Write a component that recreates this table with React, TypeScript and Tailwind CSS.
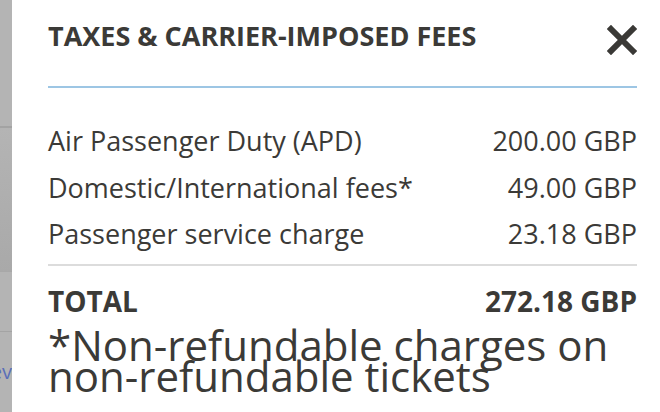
import React from 'react';

const rows = [
    { label: 'Air Passenger Duty (APD)', amount: '200.00 GBP' },
    { label: 'Domestic/International fees*', amount: '49.00 GBP' },
    { label: 'Passenger service charge', amount: '23.18 GBP' },
];

const CloseIcon = () => (
    <svg width="30" height="30" viewBox="0 0 30 30">
        <path d="M4 4 L26 26 M26 4 L4 26" stroke="#3a3936" strokeWidth="6" strokeLinecap="square" />
    </svg>
);

export default function App() {
    return (
        <div className="flex w-[660px] h-[412px] overflow-hidden bg-white text-[#3b3a37] font-['Open_Sans',sans-serif]">
            {/* Page behind the modal */}
            <div className="w-[12px] flex-shrink-0 flex flex-col bg-[#b4b4b4]">
                <div className="h-[128px] border-b-2 border-[#a3a3a3]" />
                <div className="h-[144px] border-b border-[#a8a8a8] bg-gradient-to-b from-[#b4b4b4] to-[#a9a9a9]" />
                <div className="h-[60px] border-b border-[#a4a4a4]" />
                <div className="flex justify-end overflow-hidden whitespace-nowrap text-[20px] leading-none text-[#5a6fb8] mt-[30px]">
                    Rev
                </div>
            </div>

            {/* Modal */}
            <div className="flex-1 flex flex-col pl-[36px] pr-[23px] pt-[20px]">
                <div className="h-[32px] flex items-start justify-between">
                    <h2 className="text-[27px] leading-[32px] font-bold">
                        TAXES &amp; CARRIER-IMPOSED FEES
                    </h2>
                    <button className="mt-[5px] flex-shrink-0">
                        <CloseIcon />
                    </button>
                </div>
                <div className="mt-[34px] h-[2px] bg-[#9dc6e4]" />

                <div className="pt-[30px]">
                    {rows.map((r) => (
                        <div key={r.label} className="flex justify-between text-[27px] leading-[46.5px]">
                            <span>{r.label}</span>
                            <span>{r.amount}</span>
                        </div>
                    ))}
                </div>
                <div className="mt-[6px] h-[2px] bg-[#dcdcdc]" />

                <div className="flex justify-between pt-[19px] text-[28px] leading-[32px] font-bold">
                    <span>TOTAL</span>
                    <span>272.18 GBP</span>
                </div>
                <p className="mt-[12px] text-[42px] leading-[31px]">
                    *Non-refundable charges on non-refundable tickets
                </p>
            </div>
        </div>
    );
}
